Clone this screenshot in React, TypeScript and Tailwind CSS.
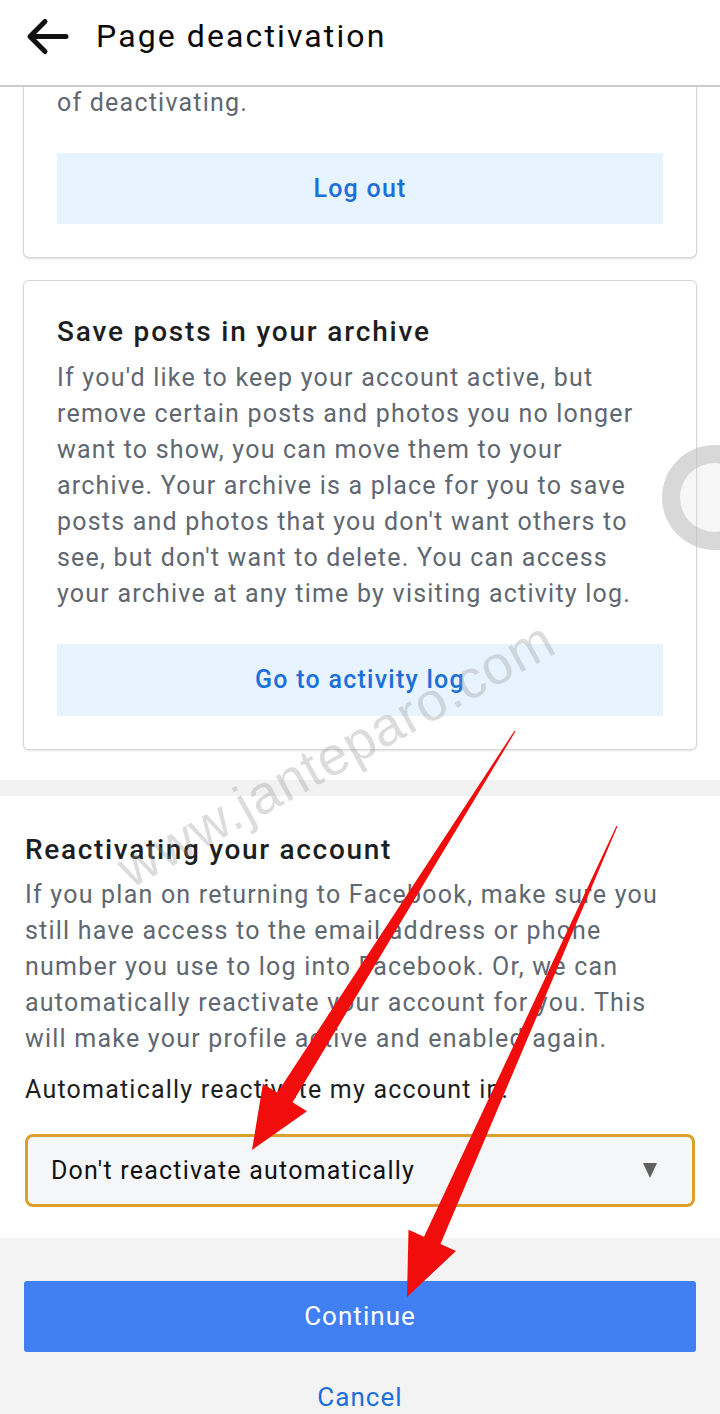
import { FC } from 'react';

type Pt = [number, number];

// tapered red annotation arrow, thin at the start and fat at the head
const arrowPoints = (s: Pt, e: Pt, head = 62, wing = 26, neck = 9) => {
  const dx = e[0] - s[0];
  const dy = e[1] - s[1];
  const len = Math.hypot(dx, dy);
  const ux = dx / len;
  const uy = dy / len;
  const nx = -uy;
  const ny = ux;
  const bx = e[0] - ux * head;
  const by = e[1] - uy * head;
  const pts: Pt[] = [
    [s[0] + nx * 0.6, s[1] + ny * 0.6],
    [bx + nx * neck, by + ny * neck],
    [bx + nx * wing, by + ny * wing],
    e,
    [bx - nx * wing, by - ny * wing],
    [bx - nx * neck, by - ny * neck],
    [s[0] - nx * 0.6, s[1] - ny * 0.6],
  ];
  return pts.map((p) => `${p[0].toFixed(1)},${p[1].toFixed(1)}`).join(' ');
};

const BackArrow: FC = () => (
  <svg width="44" height="40" viewBox="0 0 44 40" fill="none" className="shrink-0">
    <path
      d="M41 19.5H6M20 4.5L5 19.5l15 15"
      stroke="#111"
      strokeWidth="5"
      strokeLinecap="round"
      strokeLinejoin="round"
    />
  </svg>
);

const body = 'text-[25px] leading-[36px] text-[#606770]';

export default function App() {
  return (
    <div className="relative flex h-[1414px] w-[720px] flex-col overflow-hidden bg-white font-['Roboto','Noto_Sans',sans-serif] tracking-[0.076em]">
      <header className="flex h-[87px] shrink-0 items-start gap-[27px] border-b-2 border-[#cdcdcd] bg-white pl-[25px] pt-[16px]">
        <div className="pt-[1px]">
          <BackArrow />
        </div>
        <h1 className="text-[32px] leading-[40px] tracking-[0.066em] text-[#0a0a0a]">Page deactivation</h1>
      </header>

      <main className="flex flex-1 flex-col">
        <div className="px-[23px] pb-[30px]">
          <section className="rounded-b-[6px] border-x border-b border-[#d6d6d6] bg-white px-[33px] pb-[33px] shadow-[0_1px_2px_rgba(0,0,0,0.12)]">
            <p className="text-[25px] leading-[32px] text-[#606770]">of deactivating.</p>
            <button className="mt-[34px] flex h-[71px] w-full items-center justify-center bg-[#e7f3ff] text-[25px] font-medium tracking-[0.05em] text-[#1b6fd8]">
              Log out
            </button>
          </section>

          <section className="mt-[22px] rounded-[6px] border border-[#d6d6d6] bg-white px-[33px] pb-[33px] pt-[31px] shadow-[0_1px_2px_rgba(0,0,0,0.12)]">
            <h2 className="text-[28px] font-medium leading-[40px] tracking-[0.065em] text-[#1c1e21]">Save posts in your archive</h2>
            <p className={`mt-[8px] w-[595px] ${body}`}>
              If you'd like to keep your account active, but remove certain posts and photos you no longer
              want to show, you can move them to your archive. Your archive is a place for you to save posts
              and photos that you don't want others to see, but don't want to delete. You can access your
              archive at any time by visiting activity log.
            </p>
            <button className="mt-[32px] flex h-[72px] w-full items-center justify-center bg-[#e7f3ff] text-[25px] font-medium tracking-[0.05em] text-[#1b6fd8]">
              Go to activity log
            </button>
          </section>
        </div>

        <div className="h-[16px] bg-[#f2f2f2]" />

        <section className="px-[25px] pb-[31px] pt-[34px]">
          <h2 className="text-[28px] font-medium leading-[40px] tracking-[0.06em] text-[#1c1e21]">Reactivating your account</h2>
          <p className={`mt-[7px] w-[650px] ${body}`}>
            If you plan on returning to Facebook, make sure you still have access to the email address or
            phone number you use to log into Facebook. Or, we can automatically reactivate your account for
            you. This will make your profile active and enabled again.
          </p>
          <p className="mt-[15px] text-[25px] leading-[36px] text-[#1c1e21]">Automatically reactivate my account in:</p>
          <div className="mt-[26px] flex h-[73px] items-center justify-between rounded-[8px] border-[3px] border-[#d9a12c] bg-[#f5f6f7] pl-[23px] pr-[34px]">
            <span className="text-[25px] text-[#111]">Don't reactivate automatically</span>
            <svg width="16" height="17" viewBox="0 0 16 17">
              <path d="M1 1h14L8 16z" fill="#5f5f5f" />
            </svg>
          </div>
        </section>

        <footer className="flex-1 bg-[#f3f3f4] px-[24px] pt-[43px]">
          <button className="flex h-[71px] w-full items-center justify-center rounded-[3px] bg-[#4080f4] text-[26px] tracking-[0.04em] text-white">
            Continue
          </button>
          <p className="mt-[27px] text-center text-[26px] leading-[36px] tracking-[0.04em] text-[#1b6fd8]">Cancel</p>
        </footer>
      </main>

      {/* watermark */}
      <div className="pointer-events-none absolute left-[662px] top-[445px] h-[105px] w-[105px] rounded-full border-[18px] border-[rgba(185,185,185,0.5)] bg-[rgba(225,225,225,0.25)]" />
      <div className="pointer-events-none absolute left-[336px] top-[754px] -translate-x-1/2 -translate-y-1/2 -rotate-[29deg] whitespace-nowrap font-['Liberation_Sans',Arial,sans-serif] text-[54px] tracking-[0.02em] text-[rgba(150,150,150,0.33)]">
        www.janteparo.com
      </div>

      {/* annotation arrows */}
      <svg className="pointer-events-none absolute left-0 top-0" width="720" height="1414" viewBox="0 0 720 1414">
        <polygon points={arrowPoints([515, 731], [252, 1150])} fill="#f20d0d" />
        <polygon points={arrowPoints([617, 826], [407, 1297])} fill="#f20d0d" />
      </svg>
    </div>
  );
}
